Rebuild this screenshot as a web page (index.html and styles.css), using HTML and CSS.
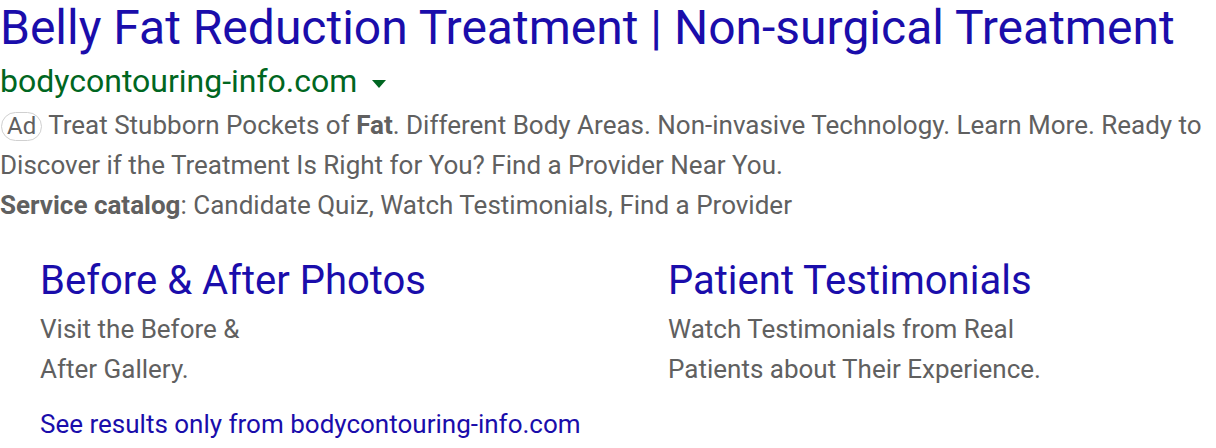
FILE: index.html
```html
<!DOCTYPE html>
<html>
<head>
<meta charset="utf-8">
<link rel="stylesheet" href="styles.css">
</head>
<body>
<div class="ad-result">
  <h3 class="title">Belly Fat Reduction Treatment | Non-surgical Treatment</h3>
  <div class="url-row"><span class="url">bodycontouring-info.com</span><span class="caret"></span></div>
  <div class="desc first"><span class="badge">Ad</span> Treat Stubborn Pockets of <b>Fat</b>. Different Body Areas. Non-invasive Technology. Learn More. Ready to Discover if the Treatment Is Right for You? Find a Provider Near You.</div>
  <div class="desc"><b>Service catalog</b>: Candidate Quiz, Watch Testimonials, Find a Provider</div>
  <div class="sitelinks">
    <div class="sitelink">
      <a class="sl-title">Before &amp; After Photos</a>
      <div class="sl-desc">Visit the Before &amp;<br>After Gallery.</div>
    </div>
    <div class="sitelink">
      <a class="sl-title">Patient Testimonials</a>
      <div class="sl-desc">Watch Testimonials from Real<br>Patients about Their Experience.</div>
    </div>
  </div>
  <a class="more">See results only from bodycontouring-info.com</a>
</div>
</body>
</html>
```
FILE: styles.css
```css
html, body {
  margin: 0;
  padding: 0;
  background: #fff;
}
body {
  font-family: Roboto, "Liberation Sans", sans-serif;
}
.ad-result {
  width: 1216px;
}
.title {
  margin: 0;
  font-weight: 400;
  font-size: 48px;
  line-height: 55px;
  color: #1a0dab;
  white-space: nowrap;
}
.url-row {
  display: flex;
  align-items: center;
  height: 44px;
  padding-top: 4px;
}
.url {
  font-size: 32px;
  color: #006621;
  line-height: 44px;
}
.caret {
  width: 0;
  height: 0;
  border-left: 7px solid transparent;
  border-right: 7px solid transparent;
  border-top: 8px solid #006621;
  margin-left: 15px;
  margin-top: 6px;
}
.desc {
  font-size: 26px;
  line-height: 40px;
  color: #606060;
}
.desc.first {
  margin-top: 2px;
}
.desc b {
  font-weight: 700;
}
.badge {
  display: inline-block;
  border: 1.5px solid #d0d0d0;
  border-radius: 15px;
  padding: 0 5px;
  margin-left: 1px;
  line-height: 27px;
  font-size: 24px;
  color: #606060;
}
.sitelinks {
  display: grid;
  grid-template-columns: 628px 1fr;
  padding-left: 40px;
  margin-top: 28px;
}
.sl-title {
  display: block;
  padding-top: 1px;
  font-size: 40px;
  line-height: 54px;
  color: #1a0dab;
}
.sl-desc {
  margin-top: 1px;
  font-size: 26px;
  line-height: 40px;
  color: #606060;
}
.more {
  display: block;
  margin-left: 40px;
  margin-top: 15px;
  font-size: 26px;
  line-height: 40px;
  color: #1a0dab;
}
```
